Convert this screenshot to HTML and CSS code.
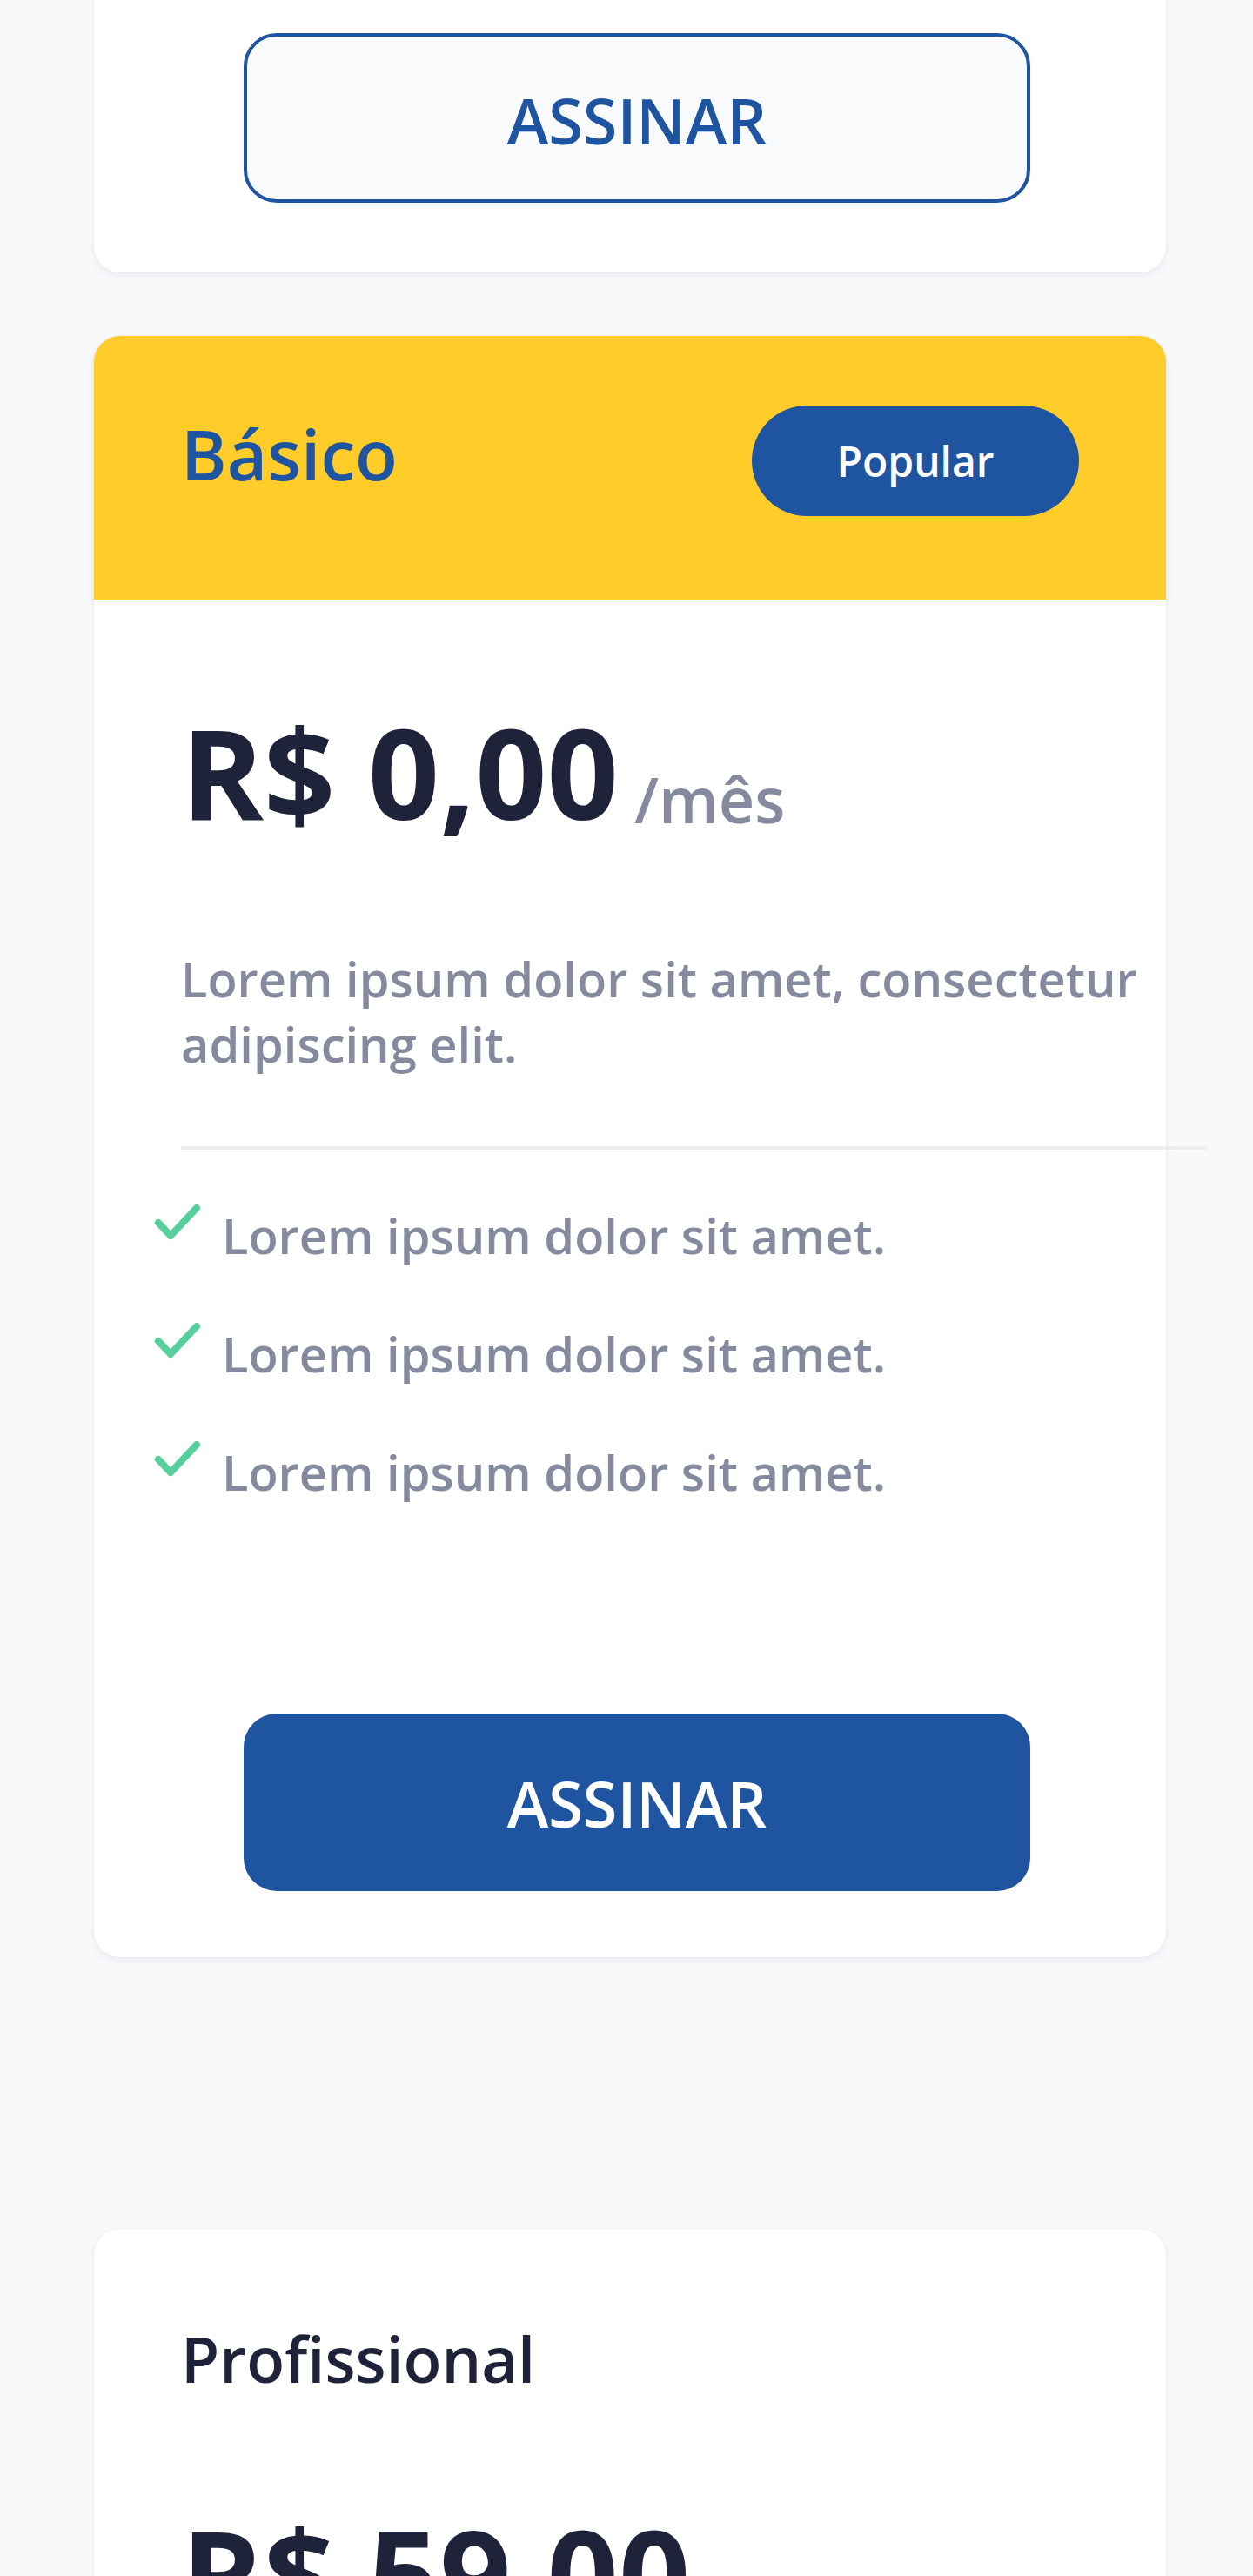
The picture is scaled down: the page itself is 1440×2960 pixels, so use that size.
FILE: index.html
```html
<!DOCTYPE html>
<html lang="pt-BR">
<head>
<meta charset="utf-8">
<title>Planos</title>
<link rel="stylesheet" href="styles.css">
</head>
<body>
<main class="plans">
  <section class="card card--first">
    <button class="btn btn--outline" type="button">ASSINAR</button>
  </section>

  <section class="card card--popular">
    <header class="card-head card-head--yellow">
      <h2 class="plan-name plan-name--blue">Básico</h2>
      <span class="badge">Popular</span>
    </header>
    <div class="card-body">
      <p class="price"><span class="amount">R$ 0,00</span><span class="per">/mês</span></p>
      <p class="desc">Lorem ipsum dolor sit amet, consectetur adipiscing elit.</p>
      <hr class="divider">
      <ul class="features">
        <li><svg class="check" viewBox="0 0 54 42" aria-hidden="true"><path d="M5 22 L19 37 L49 5"/></svg><span>Lorem ipsum dolor sit amet.</span></li>
        <li><svg class="check" viewBox="0 0 54 42" aria-hidden="true"><path d="M5 22 L19 37 L49 5"/></svg><span>Lorem ipsum dolor sit amet.</span></li>
        <li><svg class="check" viewBox="0 0 54 42" aria-hidden="true"><path d="M5 22 L19 37 L49 5"/></svg><span>Lorem ipsum dolor sit amet.</span></li>
      </ul>
      <div class="actions">
        <button class="btn btn--solid" type="button">ASSINAR</button>
      </div>
    </div>
  </section>

  <section class="card card--pro">
    <header class="card-head card-head--plain">
      <h2 class="plan-name">Profissional</h2>
    </header>
    <div class="card-body">
      <p class="price"><span class="amount">R$ 59,00</span><span class="per">/mês</span></p>
      <p class="desc">Lorem ipsum dolor sit amet, consectetur adipiscing elit.</p>
      <hr class="divider">
      <ul class="features">
        <li><svg class="check" viewBox="0 0 54 42" aria-hidden="true"><path d="M5 22 L19 37 L49 5"/></svg><span>Lorem ipsum dolor sit amet.</span></li>
        <li><svg class="check" viewBox="0 0 54 42" aria-hidden="true"><path d="M5 22 L19 37 L49 5"/></svg><span>Lorem ipsum dolor sit amet.</span></li>
      </ul>
      <div class="actions">
        <button class="btn btn--outline" type="button">ASSINAR</button>
      </div>
    </div>
  </section>
</main>
</body>
</html>
```

FILE: styles.css
```css
* { box-sizing: border-box; }

html, body {
  margin: 0;
  padding: 0;
}

body {
  background: #F8F9FB;
  font-family: "Open Sans", "Noto Sans", "Liberation Sans", sans-serif;
  color: #1F2339;
}

.plans {
  display: flex;
  flex-direction: column;
  padding: 0 100px 0 108px;
}

.card {
  background: #FFFFFF;
  border-radius: 30px;
  box-shadow: 0 4px 10px rgba(31, 35, 57, 0.06), 0 0 0 1px rgba(31, 35, 57, 0.025);
}

.card--first {
  margin-top: -40px;
  padding: 78px 0 80px 172px;
}

.card--popular {
  margin-top: 73px;
}

.card--pro {
  margin-top: 312px;
}

.card-head {
  display: flex;
  justify-content: space-between;
  align-items: flex-start;
}

.card-head--yellow {
  background: #FFCC2A;
  border-radius: 30px 30px 0 0;
  padding: 80px 100px 96px;
  box-shadow: 0 3px 6px rgba(31, 35, 57, 0.06);
}

.card-head--plain {
  padding: 100px 100px 0;
}

.plan-name {
  margin: 0;
  font-size: 72px;
  font-weight: 600;
  line-height: normal;
  color: #1F2339;
}

.plan-name--blue {
  font-size: 80px;
  font-weight: 600;
  color: #1F54A0;
}

.badge {
  display: flex;
  align-items: center;
  justify-content: center;
  width: 376px;
  height: 127px;
  border-radius: 64px;
  background: #1F54A0;
  color: #FFFFFF;
  font-size: 48px;
  font-weight: 600;
}

.card-body {
  padding: 102px 0 76px 100px;
}

.price {
  margin: 0;
  height: 191px;
  font-size: 144px;
  line-height: 191px;
  white-space: nowrap;
}

.amount {
  font-weight: 700;
  color: #1F2339;
}

.per {
  margin-left: 18px;
  font-size: 72px;
  font-weight: 600;
  color: #868A9E;
  vertical-align: -4px;
}

.desc {
  margin: 105px 0 0;
  width: 1179px;
  font-size: 56px;
  font-weight: 600;
  line-height: 75px;
  color: #868A9E;
}

.divider {
  margin: 80px 0 0;
  width: 1179px;
  height: 4px;
  border: 0;
  background: #EDEDEF;
}

.features {
  list-style: none;
  margin: 61px 0 0 -31px;
  padding: 0;
  display: flex;
  flex-direction: column;
  gap: 61px;
}

.features li {
  display: flex;
  align-items: flex-start;
  gap: 24px;
  font-size: 56px;
  font-weight: 600;
  line-height: 75px;
  color: #868A9E;
}

.check {
  flex: none;
  width: 54px;
  height: 42px;
  margin-top: 1px;
}

.check path {
  fill: none;
  stroke: #57CF9C;
  stroke-width: 8;
  stroke-linecap: round;
  stroke-linejoin: round;
}

.actions {
  margin: 240px 0 0 72px;
}

.btn {
  display: block;
  width: 904px;
  font-family: inherit;
  font-size: 72px;
  font-weight: 600;
  line-height: normal;
  text-align: center;
  cursor: pointer;
  border-radius: 38px;
}

.btn--outline {
  padding: 47px 0 42px;
  border: 4px solid #1F54A0;
  background: #F8FAFC;
  color: #1F54A0;
}

.btn--solid {
  padding: 54px 0 52px;
  border: 0;
  background: #1F54A0;
  color: #FFFFFF;
}
```
